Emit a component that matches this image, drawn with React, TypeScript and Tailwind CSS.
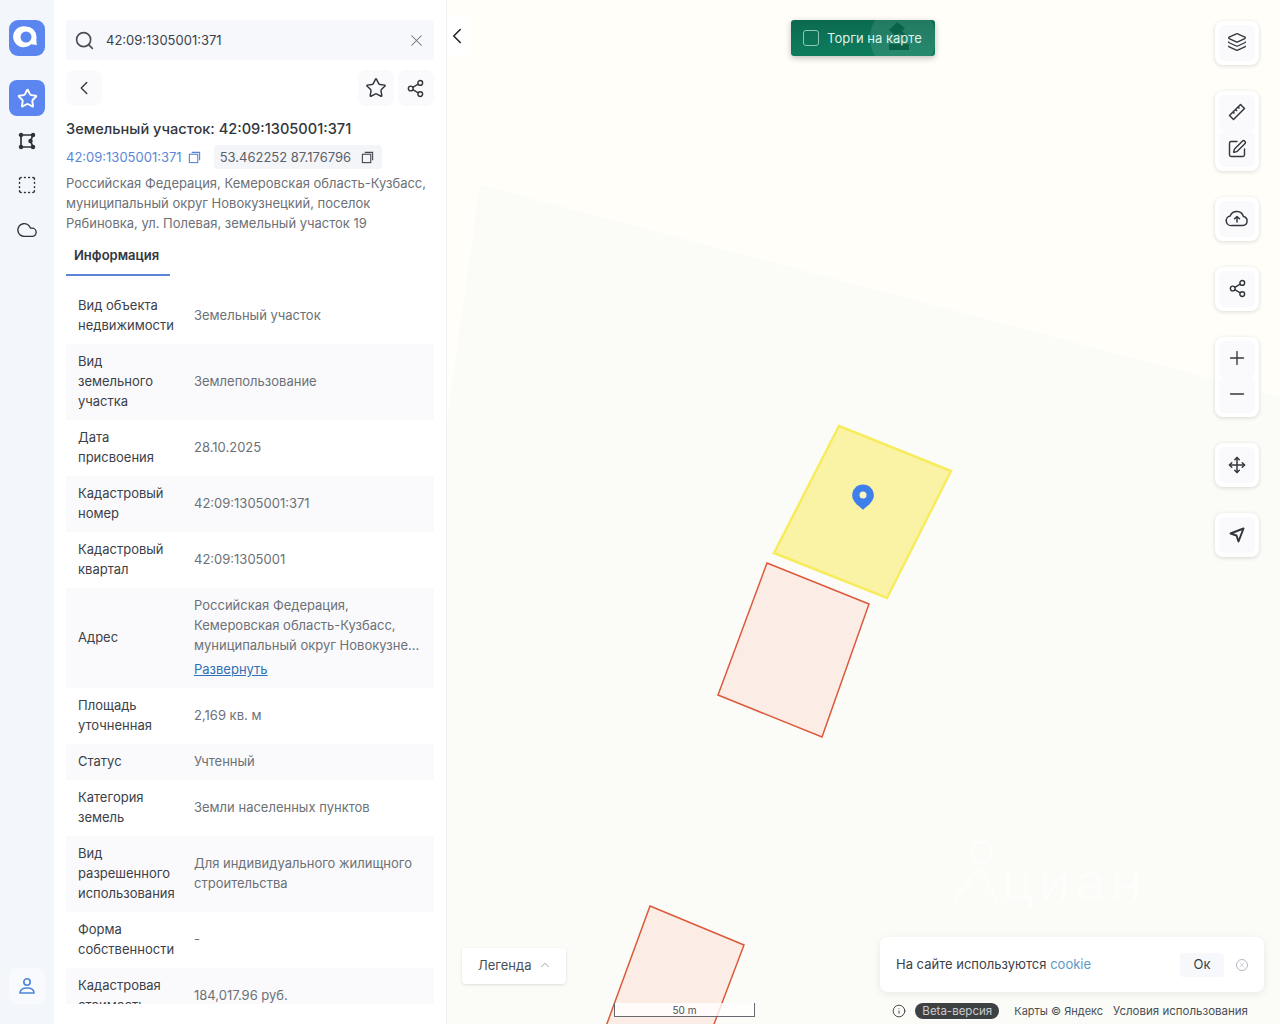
import { ChevronLeft, ChevronUp, Cloud, Info, Layers, Minus, Move, Plus, Search, Share2, SquareDashed, SquarePen, Star, X } from "lucide-react";
import type { ReactNode } from "react";

const rows: { label: string; value: ReactNode }[] = [
  { label: "Вид объекта недвижимости", value: "Земельный участок" },
  { label: "Вид земельного участка", value: "Землепользование" },
  { label: "Дата присвоения", value: "28.10.2025" },
  { label: "Кадастровый номер", value: "42:09:1305001:371" },
  { label: "Кадастровый квартал", value: "42:09:1305001" },
  {
    label: "Адрес",
    value: (
      <div>
        <div>Российская Федерация, Кемеровская область-Кузбасс,</div>
        <div className="truncate">муниципальный округ Новокузнецкий, поселок Рябиновка</div>
        <div className="mt-1 text-[#2f6fb5] underline">Развернуть</div>
      </div>
    ),
  },
  { label: "Площадь уточненная", value: "2,169 кв. м" },
  { label: "Статус", value: "Учтенный" },
  { label: "Категория земель", value: "Земли населенных пунктов" },
  { label: "Вид разрешенного использования", value: "Для индивидуального жилищного строительства" },
  { label: "Форма собственности", value: "-" },
  { label: "Кадастровая стоимость", value: "184,017.96 руб." },
];

function CopyIcon({ className }: { className?: string }) {
  return (
    <svg viewBox="0 0 14 14" fill="none" stroke="currentColor" strokeWidth="1.2" className={className}>
      <rect x="1.500" y="3.500" width="9" height="9" />
      <path d="M4 1.500h8.500V10" />
    </svg>
  );
}

function ToolCard({ children }: { children: ReactNode }) {
  return <div className="flex w-11 flex-col rounded-lg bg-white p-1 shadow-[0_1px_4px_rgba(0,0,0,0.14)]">{children}</div>;
}

function ToolButton({ children, raised }: { children: ReactNode; raised?: boolean }) {
  return (
    <button className={`flex h-9 w-9 items-center justify-center rounded-md bg-[#fafafc] text-[#33373d] ${raised ? "pb-[2px]" : ""}`}>
      {children}
    </button>
  );
}

function Sidebar() {
  return (
    <aside className="flex h-full w-[54px] shrink-0 flex-col items-center bg-[#f3f6fb] pt-5 pb-5">
      <svg viewBox="0 0 36 36" className="h-9 w-9">
        <rect width="36" height="36" rx="9" fill="#5b86f0" />
        <path d="M17 6.500a10.500 10.500 0 0 1 10.500 10.500c0 3-.5 5 .5 8l-6-.800a10.500 10.500 0 1 1-5-17.700z" fill="#fff" />
        <circle cx="17" cy="17" r="5.500" fill="#5b86f0" />
      </svg>
      <div className="mt-6 flex flex-col items-center">
        <div className="flex h-9 w-9 items-center justify-center rounded-lg bg-[#5b86f0] text-white">
          <Star size={21} strokeWidth={2.2} />
        </div>
        <div className="mt-[7px] flex h-9 w-9 items-center justify-center text-[#2f343a]">
          <svg viewBox="0 0 18 18" fill="none" stroke="currentColor" strokeWidth="1.7" className="h-[18px] w-[18px]">
            <path d="M3 3h12l-2.500 6L15 15H3z" />
            <circle cx="3" cy="3" r="1.400" fill="currentColor" />
            <circle cx="15" cy="3" r="1.400" fill="currentColor" />
            <circle cx="12.500" cy="9" r="1.400" fill="currentColor" />
            <circle cx="15" cy="15" r="1.400" fill="currentColor" />
            <circle cx="3" cy="15" r="1.400" fill="currentColor" />
          </svg>
        </div>
        <div className="mt-2 flex h-9 w-9 items-center justify-center text-[#2f343a]">
          <SquareDashed size={20} strokeWidth={1.8} />
        </div>
        <div className="mt-[9px] flex h-9 w-9 items-center justify-center text-[#2f343a]">
          <Cloud size={22} strokeWidth={1.5} />
        </div>
      </div>
      <div className="mt-auto flex h-9 w-9 items-center justify-center rounded-lg bg-[#f8fafd] text-[#4a86d8]">
        <svg viewBox="0 0 18 18" fill="none" stroke="currentColor" strokeWidth="1.600" className="h-[18px] w-[18px]">
          <circle cx="9" cy="5" r="3.200" />
          <path d="M2 16c0-3.200 2.500-5 7-5s7 1.800 7 5z" />
        </svg>
      </div>
    </aside>
  );
}

function InfoPanel() {
  return (
    <section className="flex h-full w-[393px] shrink-0 flex-col border-r border-[#f0f1f3] bg-white pt-5 pr-3 pb-5 pl-3">
      <div className="flex h-10 shrink-0 items-center rounded bg-[#f6f8fc] pr-[8px] pl-[8px]">
        <Search size={21} strokeWidth={1.9} className="text-[#4b5057]" />
        <span className="ml-[11px] flex-1 pb-px text-[#3c4148]">42:09:1305001:371</span>
        <X size={19} strokeWidth={1.3} className="text-[#6b7076]" />
      </div>
      <div className="mt-[10px] flex shrink-0 items-center justify-between">
        <button className="flex h-9 w-9 items-center justify-center rounded-lg bg-[#fafafc] text-[#33373d]">
          <ChevronLeft size={22} strokeWidth={1.5} />
        </button>
        <div className="flex gap-1">
          <button className="flex h-9 w-9 items-center justify-center rounded-lg bg-[#fafafc] text-[#33373d]">
            <Star size={22} strokeWidth={1.6} />
          </button>
          <button className="flex h-9 w-9 items-center justify-center rounded-lg bg-[#fafafc] pr-px text-[#33373d]">
            <Share2 size={19} strokeWidth={1.8} />
          </button>
        </div>
      </div>
      <h1 className="mt-[11px] shrink-0 text-[14.600px] leading-[24px] font-medium text-[#33373d]">Земельный участок: 42:09:1305001:371</h1>
      <div className="mt-[4px] flex h-6 shrink-0 items-center">
        <span className="text-[#5b86d8]">42:09:1305001:371</span>
        <CopyIcon className="ml-[6px] h-[13px] w-[13px] text-[#5b86d8]" />
        <div className="ml-[13px] flex h-6 items-center rounded bg-[#f3f5f9] pr-2 pl-[6px] text-[#5c6168]">
          <span>53.462252 87.176796</span>
          <CopyIcon className="ml-[10px] h-[13px] w-[13px] text-[#44484e]" />
        </div>
      </div>
      <p className="mt-[4px] shrink-0 leading-[20px] text-[#6c7177]">
        Российская Федерация, Кемеровская область-Кузбасс, муниципальный округ Новокузнецкий, поселок Рябиновка, ул. Полевая, земельный участок 19
      </p>
      <div className="mt-[4px] shrink-0">
        <div className="w-[104px] border-b-2 border-[#5b86d8] pt-[8px] pb-[9px] pl-2 font-semibold text-[#33373d]">Информация</div>
      </div>
      <div className="mt-3 min-h-0 flex-1 overflow-hidden">
        {rows.map((row, i) => (
          <div key={row.label} className={`flex items-center pt-[7px] pb-[9px] pl-3 ${i % 2 === 1 ? "bg-[#fafafc]" : ""}`}>
            <div className="w-[116px] shrink-0 pr-[14px] text-[#3c4148]">{row.label}</div>
            <div className="min-w-0 flex-1 pr-3 text-[#6c7177]">{row.value}</div>
          </div>
        ))}
      </div>
    </section>
  );
}

function MapArea() {
  return (
    <main className="relative h-full min-w-0 flex-1 overflow-hidden bg-[#fffef9]">
      <svg viewBox="0 0 833 1024" className="absolute inset-0 h-full w-full">
        <polygon points="33,185 833,397 833,1024 0,1024 0,420" fill="#fbfbf7" />
        <polygon points="392,426 504,471 440,598 327,553" fill="#faf3a6" stroke="#f7ec5e" strokeWidth="2.500" />
        <polygon points="320,563 422,604 375,737 271,695" fill="#fbece6" stroke="#dc5a3c" strokeWidth="1.500" />
        <polygon points="203,906 297,945 261,1040 154,1040" fill="#fbece6" stroke="#dc5a3c" strokeWidth="1.500" />
        <path d="M416 484.500c-6 0-10.800 4.800-10.800 10.800 0 4 2.800 7.500 5.300 9.800l5.500 4.600 5.500-4.600c2.500-2.300 5.300-5.800 5.300-9.800 0-6-4.800-10.800-10.800-10.800z" fill="#3f7fea" />
        <circle cx="416" cy="495" r="3.500" fill="#fbf6c0" />
        {/* faint map watermark */}
        <g fill="none" stroke="#ffffff" strokeOpacity="0.5" strokeWidth="3">
          <circle cx="534" cy="852" r="10" />
          <path d="M534 866l-28 36M534 866l16 36" />
        </g>
      </svg>
      <div className="absolute top-[850px] left-[555px] text-[52px] leading-[64px] tracking-[6px] text-white/50">циан</div>

      <div className="absolute top-4 left-0 flex h-10 w-[23px] items-center bg-white text-[#24272b]">
        <ChevronLeft size={26} strokeWidth={1.500} className="-ml-[3px]" />
      </div>

      <div className="absolute top-5 left-[344px] flex h-9 w-36 items-center overflow-hidden rounded-[3px] bg-gradient-to-b from-[#0b6a50] to-[#0e7d5e] pl-3 text-[#dff3ea] shadow-[0_2px_6px_rgba(0,0,0,0.25)]">
        <div className="absolute top-[-15px] left-[79px] h-[66px] w-[66px] rounded-full bg-white/10" />
        <svg viewBox="0 0 24 30" className="absolute top-[1px] left-[96px] h-[30px] w-[24px]" fill="#0a6249">
          <path d="M10 1l8 6-3 3 5 5-3 2-5-5-3 3-7-6z" />
          <rect x="2" y="23" width="20" height="6" />
        </svg>
        <span className="relative h-4 w-4 rounded-[3px] border border-[#8fc9b3]" />
        <span className="relative ml-2 pb-px">Торги на карте</span>
      </div>

      <div className="absolute top-[21px] right-[21px] flex flex-col gap-[26px]">
        <ToolCard><ToolButton raised><Layers size={20} strokeWidth={1.600} /></ToolButton></ToolCard>
        <ToolCard>
          <ToolButton raised>
            <svg viewBox="0 0 20 20" fill="none" stroke="currentColor" strokeWidth="1.500" strokeLinejoin="round" className="h-5 w-5">
              <path d="M13.500 2.500l4 4L6.500 17.500l-4-4z" />
              <path d="M11 5l1.500 1.500M8.500 7.500l1.500 1.500M6 10l1.500 1.500" />
            </svg>
          </ToolButton>
          <ToolButton><SquarePen size={20} strokeWidth={1.700} /></ToolButton>
        </ToolCard>
        <ToolCard>
          <ToolButton raised>
            <svg viewBox="0 0 24 20" fill="none" stroke="currentColor" strokeWidth="1.500" strokeLinecap="round" strokeLinejoin="round" className="h-5 w-6">
              <path d="M7 17.500h10.500a4.500 4.500 0 0 0 1-8.900A7 7 0 0 0 5.200 8 4.800 4.800 0 0 0 7 17.500z" />
              <path d="M12 14V8.500M9.500 10.800L12 8.500l2.500 2.300" />
            </svg>
          </ToolButton>
        </ToolCard>
        <ToolCard><ToolButton raised><Share2 size={19} strokeWidth={1.800} /></ToolButton></ToolCard>
        <ToolCard>
          <ToolButton raised><Plus size={22} strokeWidth={1.500} /></ToolButton>
          <ToolButton raised><Minus size={22} strokeWidth={1.500} /></ToolButton>
        </ToolCard>
        <ToolCard><ToolButton><Move size={18} strokeWidth={2} /></ToolButton></ToolCard>
        <ToolCard>
          <ToolButton>
            <svg viewBox="0 0 18 18" fill="none" stroke="currentColor" strokeWidth="2" strokeLinejoin="round" className="h-[18px] w-[18px]">
              <path d="M15.500 2.500L2.500 7.500l6 2 2 6z" />
            </svg>
          </ToolButton>
        </ToolCard>
      </div>

      <div className="absolute bottom-10 left-[15px] flex h-9 w-[104px] items-center rounded bg-white pb-[3px] pl-4 text-[#4a4f55] shadow-[0_1px_3px_rgba(0,0,0,0.12)]">
        <span>Легенда</span>
        <ChevronUp size={14} strokeWidth={1.800} className="ml-[6px] text-[#b5b8bc]" />
      </div>

      <div className="absolute bottom-[7px] left-[167px] flex h-[14px] w-[141px] items-center justify-center border-x border-b border-[#666a70] bg-white/80 text-[10px] text-[#4a4f55]">50 m</div>

      <div className="absolute right-4 bottom-8 flex h-[55px] w-[384px] items-center rounded-lg bg-white pr-4 pl-4 shadow-[0_2px_8px_rgba(0,0,0,0.08)]">
        <span className="pb-[2px] text-[#3c4148]">На сайте используются <span className="text-[#5b9ac8]">cookie</span></span>
        <button className="ml-auto flex h-6 w-11 items-center justify-center rounded bg-[#f6f8fc] pb-px text-[#3c4148]">Ок</button>
        <span className="ml-3 flex h-3 w-3 items-center justify-center rounded-full border border-[#b5bac0] text-[#b5bac0]"><X size={8} /></span>
      </div>

      <div className="absolute right-8 bottom-[2px] flex h-[22px] items-center text-[11.500px] text-[#4a4f55]">
        <Info size={14} strokeWidth={1.500} className="text-[#33373d]" />
        <span className="ml-[9px] flex h-4 w-[84px] items-center justify-center rounded-full bg-[#3e4144] text-[#c9cbce]">Beta-версия</span>
        <span className="ml-[15px] text-[11px]">Карты © Яндекс</span>
        <span className="ml-[10px]">Условия использования</span>
      </div>
    </main>
  );
}

export default function App() {
  return (
    <div className="flex h-screen w-full overflow-hidden font-['Inter','Liberation_Sans',sans-serif] text-[13px] leading-5">
      <Sidebar />
      <InfoPanel />
      <MapArea />
    </div>
  );
}
